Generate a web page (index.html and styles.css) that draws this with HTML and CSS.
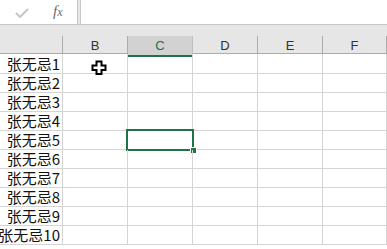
FILE: index.html
```html
<!DOCTYPE html>
<html lang="zh-CN">
<head>
  <meta charset="UTF-8">
  <title>Sheet</title>
  <link rel="stylesheet" href="styles.css">
</head>
<body>
  <div class="formula-bar">
    <div class="tools">
      <svg class="check" width="14" height="10" viewBox="0 0 14 10"><path d="M1 5l4 4 8-8" fill="none" stroke="#c8c8c8" stroke-width="2.2"/></svg>
      <span class="fx">f<sub>x</sub></span>
    </div>
    <div class="input"></div>
  </div>
  <div class="gap"></div>

  <div class="sheet">
    <div class="head">
      <div class="col-head">&nbsp;</div>
      <div class="col-head">B</div>
      <div class="col-head active">C</div>
      <div class="col-head">D</div>
      <div class="col-head">E</div>
      <div class="col-head">F</div>
    </div>
    <div id="rows"></div>
  </div>

  <script>
    const rows = document.getElementById('rows');
    for (let i = 1; i <= 10; i++) {
      const row = document.createElement('div');
      row.classList.add('row');
      if (i === 1) row.classList.add('first');
      row.innerHTML = `
        <div class="cell name">张无忌${i}</div>
        <div class="cell">${i === 1 ? '<svg class="cursor" width="16" height="15" viewBox="0 0 16 15"><path d="M5.5 1.5h5v4h4v4.5h-4v4h-5v-4h-4v-4.5h4z" fill="#fff" stroke="#000" stroke-width="2"/></svg>' : ''}</div>
        <div class="cell">${i === 5 ? '<div class="selection"><span class="handle"></span></div>' : ''}</div>
        <div class="cell"></div>
        <div class="cell"></div>
        <div class="cell"></div>
      `;
      rows.appendChild(row);
    }
  </script>
</body>
</html>
```

FILE: styles.css
```css
body {
  margin: 0;
  background: #ffffff;
  font-family: "Liberation Sans", "Noto Sans CJK SC", sans-serif;
  overflow: hidden;
  width: 387px;
  height: 249px;
}
.formula-bar {
  display: flex;
  height: 24px;
  background: #e6e6e6;
  border-bottom: 1px solid #c8c8c8;
}
.tools {
  width: 77px;
  background: #ffffff;
  border-right: 1px solid #c8c8c8;
  display: flex;
  align-items: center;
}
.check {
  margin-left: 15px;
  margin-top: 1px;
}
.fx {
  font-family: "Liberation Serif", serif;
  font-style: italic;
  color: #6a6a6a;
  font-size: 15px;
  margin-left: 24px;
  margin-top: -2px;
}
.fx sub {
  font-size: 12px;
  vertical-align: baseline;
}
.input {
  flex: 1;
  margin-left: 2px;
  background: #ffffff;
  border-left: 1px solid #c8c8c8;
}
.gap {
  height: 11px;
  background: #e6e6e6;
}
.sheet {
  display: flex;
  flex-direction: column;
}
.head,
.row {
  display: grid;
  grid-template-columns: 63px 65px 65px 65px 65px 64px;
}
.head {
  height: 17px;
  background: #e6e6e6;
  border-bottom: 1px solid #ababab;
}
.col-head {
  border-right: 1px solid #ababab;
  font-size: 13px;
  line-height: 19px;
  text-align: center;
  color: #333333;
  box-sizing: border-box;
}
.col-head.active {
  background: #d2d2d2;
  border-bottom: 2px solid #217346;
  border-right-color: #c0c0c0;
  color: #217346;
}
.row {
  height: 18px;
  border-bottom: 1px solid #d4d4d4;
}
.row.first {
  height: 19px;
}
.cell {
  border-right: 1px solid #d4d4d4;
  position: relative;
}
.name {
  font-family: "Noto Sans CJK SC", sans-serif;
  font-size: 15px;
  line-height: 18px;
  text-align: right;
  padding-right: 2px;
  color: #111111;
  white-space: nowrap;
  direction: rtl;
}
.row.first .name {
  line-height: 20px;
}
.cursor {
  position: absolute;
  left: 28px;
  top: 6px;
}
.selection {
  position: absolute;
  left: -2px;
  top: -2px;
  width: 64px;
  height: 18px;
  border: 2px solid #217346;
}
.handle {
  position: absolute;
  right: -5px;
  bottom: -5px;
  width: 5px;
  height: 5px;
  background: #217346;
  border: 1px solid #ffffff;
}
```
